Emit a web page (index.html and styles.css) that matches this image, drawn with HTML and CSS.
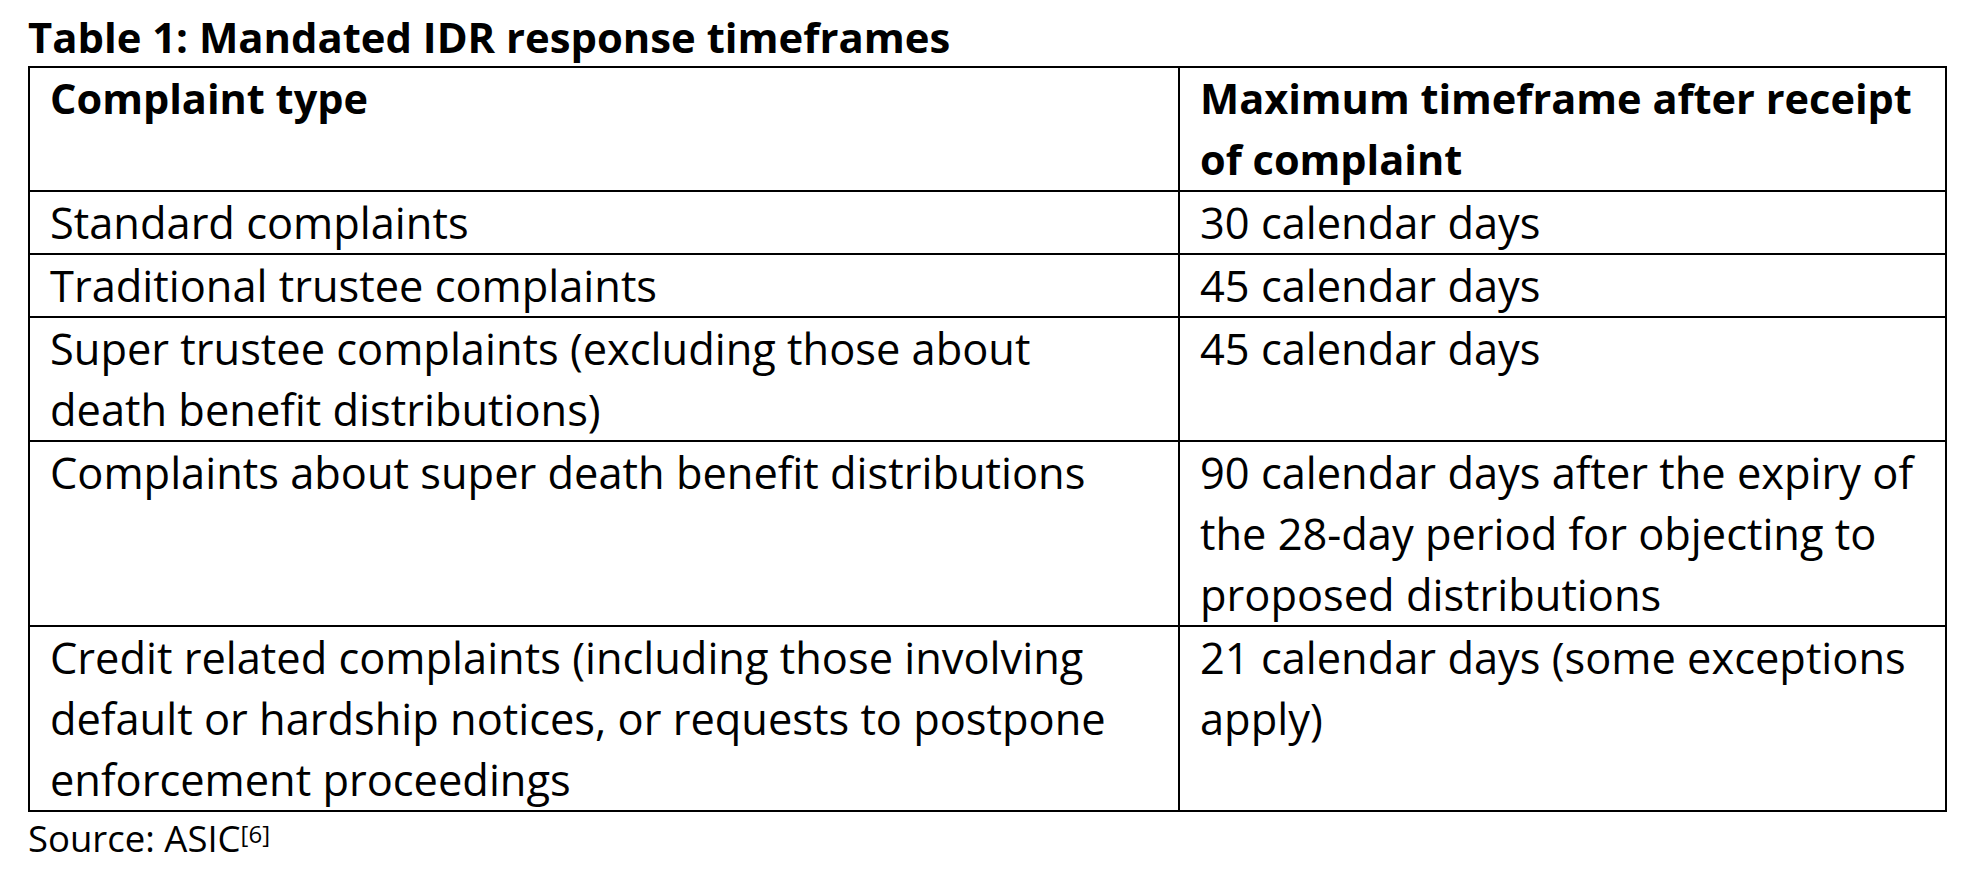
FILE: index.html
```html
<!DOCTYPE html>
<html lang="en">
<head>
<meta charset="utf-8">
<title>Table 1: Mandated IDR response timeframes</title>
<link rel="stylesheet" href="styles.css">
</head>
<body>
<div class="figure">
  <div class="caption">Table 1: Mandated IDR response timeframes</div>
  <table class="idr">
    <thead>
      <tr>
        <th class="c1">Complaint type</th>
        <th class="c2">Maximum timeframe after receipt<br>of complaint</th>
      </tr>
    </thead>
    <tbody>
      <tr>
        <td class="c1">Standard complaints</td>
        <td class="c2">30 calendar days</td>
      </tr>
      <tr>
        <td class="c1">Traditional trustee complaints</td>
        <td class="c2">45 calendar days</td>
      </tr>
      <tr>
        <td class="c1">Super trustee complaints (excluding those about<br>death benefit distributions)</td>
        <td class="c2">45 calendar days</td>
      </tr>
      <tr>
        <td class="c1">Complaints about super death benefit distributions</td>
        <td class="c2">90 calendar days after the expiry of<br>the 28-day period for objecting to<br>proposed distributions</td>
      </tr>
      <tr>
        <td class="c1">Credit related complaints (including those involving<br>default or hardship notices, or requests to postpone<br>enforcement proceedings</td>
        <td class="c2">21 calendar days (some exceptions<br>apply)</td>
      </tr>
    </tbody>
  </table>
  <div class="source">Source: ASIC<sup class="ref">[6]</sup></div>
</div>
</body>
</html>
```

FILE: styles.css
```css
html, body {
  margin: 0;
  padding: 0;
  background: #ffffff;
}

body {
  font-family: "Open Sans", "Liberation Sans", sans-serif;
  color: #000000;
}

.figure {
  padding-left: 28px;
}

.caption {
  font-weight: 700;
  font-size: 41.8px;
  line-height: 58px;
  padding-top: 8px;
  white-space: nowrap;
}

.idr {
  border-collapse: separate;
  border-spacing: 0;
  table-layout: fixed;
  width: 1919px;
  border-top: 2px solid #000;
  border-left: 2px solid #000;
  font-size: 43.4px;
  line-height: 61px;
}

.idr th,
.idr td {
  box-sizing: border-box;
  padding: 0 20px;
  border-right: 2px solid #000;
  border-bottom: 2px solid #000;
  text-align: left;
  vertical-align: top;
  white-space: nowrap;
}

.idr th {
  font-weight: 700;
  font-size: 41.5px;
}

.idr .c1 {
  width: 1150px;
}

.source {
  font-size: 36.5px;
  line-height: 44px;
  padding-top: 4px;
}

.ref {
  font-size: 24px;
  line-height: 0;
  vertical-align: 9px;
}
```
